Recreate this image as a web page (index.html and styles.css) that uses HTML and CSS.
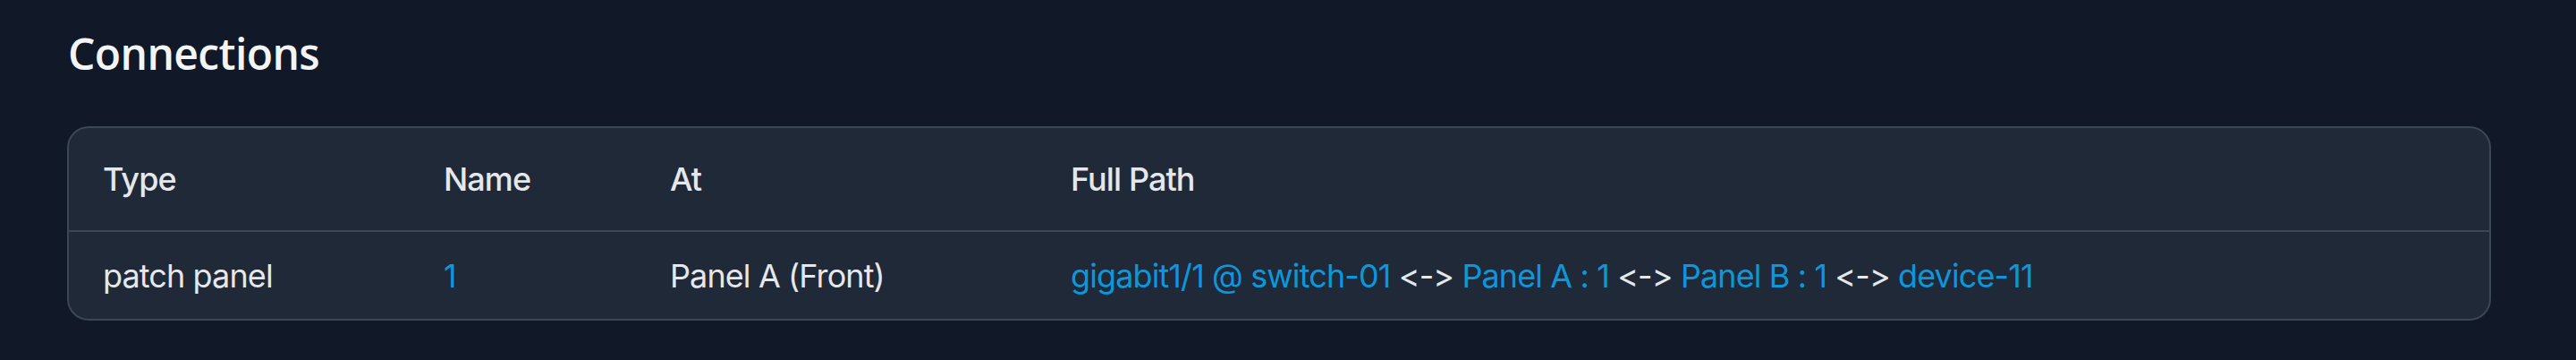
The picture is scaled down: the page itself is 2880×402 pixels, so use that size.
FILE: index.html
```html
<!DOCTYPE html>
<html lang="en">
<head>
  <meta charset="UTF-8">
  <meta name="viewport" content="width=device-width, initial-scale=1.0">
  <title>Connections</title>
  <link rel="stylesheet" href="styles.css">
</head>
<body>
  <div class="page">
    <h2 class="section-title">Connections</h2>

    <div class="card">
      <div class="row head">
        <div class="cell">Type</div>
        <div class="cell">Name</div>
        <div class="cell">At</div>
        <div class="cell">Full Path</div>
      </div>
      <div class="row">
        <div class="cell">patch panel</div>
        <div class="cell"><a href="#">1</a></div>
        <div class="cell">Panel A (Front)</div>
        <div class="cell path">
          <a href="#">gigabit1/1 @ switch-01</a> &lt;-&gt;
          <a href="#">Panel A : 1</a> &lt;-&gt;
          <a href="#">Panel B : 1</a> &lt;-&gt;
          <a href="#">device-11</a>
        </div>
      </div>
    </div>
  </div>
</body>
</html>
```

FILE: styles.css
```css
body {
  margin: 0;
  padding: 0;
  background: #111827;
  color: #e5e7eb;
  font-family: Inter, "Noto Sans", sans-serif;
}
.page {
  padding: 27px 95px 40px 75px;
}
.section-title {
  margin: 0 0 49px 1px;
  font-family: "Open Sans", sans-serif;
  font-size: 48px;
  font-weight: 600;
  color: #f3f4f6;
  letter-spacing: -0.6px;
}
.card {
  background: #1f2937;
  border: 2px solid #3b4657;
  border-radius: 24px;
  overflow: hidden;
}
.row {
  display: grid;
  grid-template-columns: 381px 253px 448px 1fr;
  align-items: center;
  height: 97px;
  font-size: 36px;
  letter-spacing: -0.9px;
}
.row.head {
  height: 114px;
  font-weight: 500;
  border-bottom: 2px solid #3b4657;
}
.cell {
  padding: 0 40px 0 38px;
  white-space: nowrap;
}
.cell a {
  color: #0c97dc;
  text-decoration: none;
}
```
